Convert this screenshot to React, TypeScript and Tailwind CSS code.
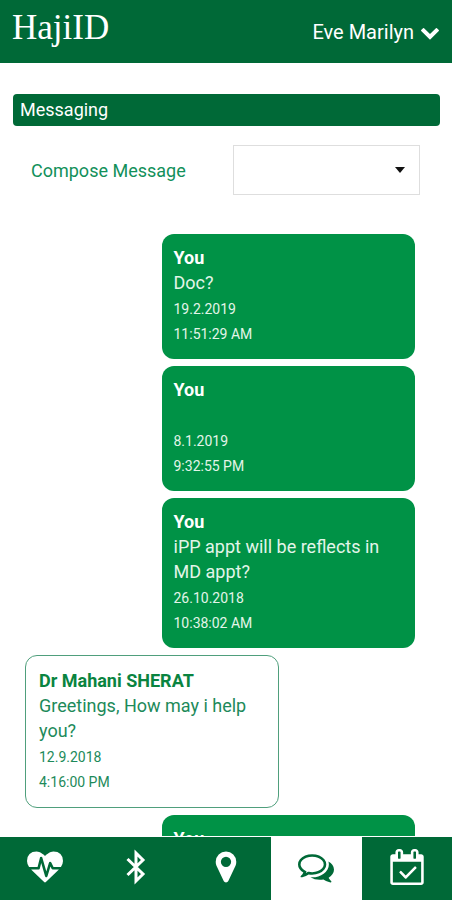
import { useState } from "react";
import clsx from "clsx";

type Message = {
  id: number;
  from: string;
  mine: boolean;
  text?: string;
  date?: string;
  time?: string;
};

const messages: Message[] = [
  { id: 1, from: "You", mine: true, text: "Doc?", date: "19.2.2019", time: "11:51:29 AM" },
  { id: 2, from: "You", mine: true, text: "", date: "8.1.2019", time: "9:32:55 PM" },
  { id: 3, from: "You", mine: true, text: "iPP appt will be reflects in MD appt?", date: "26.10.2018", time: "10:38:02 AM" },
  { id: 4, from: "Dr Mahani SHERAT", mine: false, text: "Greetings, How may i help you?", date: "12.9.2018", time: "4:16:00 PM" },
  { id: 5, from: "You", mine: true },
];

const CHEVRON =
  "M1683 808l-742 741q-19 19-45 19t-45-19l-742-741q-19-19-19-45.5t19-45.5l166-165q19-19 45-19t45 19l531 531 531-531q19-19 45-19t45 19l166 165q19 19 19 45.5t-19 45.5z";
const HEARTBEAT =
  "M1280 1024h305q-5 6-10 10.5t-9 7.5l-3 4-623 600q-18 18-44 18t-44-18l-624-602q-5-2-21-20h369q22 0 39.5-13.5t22.5-34.5l70-281 190 667q6 20 23 33t39 13q21 0 38-13t23-33l146-485 56 112q18 35 57 35zm512-428q0 145-103 300h-369l-111-221q-8-17-25.5-27t-36.5-8q-45 5-56 46l-129 430-196-686q-6-20-23.5-33t-39.5-13-39 13.5-22 34.5l-116 464h-423q-103-155-103-300 0-220 127-344t351-124q62 0 126.5 21.5t120 58 95.5 68.5 76 68q36-36 76-68t95.5-68.5 120-58 126.5-21.5q224 0 351 124t127 344z";
const MARKER =
  "M1152 640q0-106-75-181t-181-75-181 75-75 181 75 181 181 75 181-75 75-181zm256 0q0 109-33 179l-364 774q-16 33-47.5 52t-67.5 19-67.5-19-46.5-52l-365-774q-33-70-33-179 0-212 150-362t362-150 362 150 150 362z";
const COMMENTS =
  "M704 384q-153 0-286 52t-211.5 141-78.5 191q0 82 53 158t149 132l97 56-35 84q34-20 62-39l44-31 53 10q78 14 153 14 153 0 286-52t211.5-141 78.5-191-78.5-191-211.5-141-286-52zm0-128q191 0 353.5 68.5t256.5 186.5 94 257-94 257-256.5 186.5-353.5 68.5q-86 0-176-16-124 88-278 128-36 9-86 16h-3q-11 0-20.5-8t-11.5-21q-1-3-1-6.5t.5-6.5 2-6l2.5-5 3.5-5.5 4-5 4.5-5 4-4.5q5-6 23-25t26-29.5 22.5-29 25-38.5 20.5-44q-124-72-195-177t-71-224q0-139 94-257t256.5-186.5 353.5-68.5zm822 1169q10 24 20.5 44t25 38.5 22.5 29 26 29.5 23 25q1 1 4 4.5t4.5 5 4 5 3.5 5.5l2.5 5 2 6 .5 6.5-1 6.5q-3 14-13 22t-22 7q-50-7-86-16-154-40-278-128-90 16-176 16-271 0-472-132 58 4 88 4 161 0 309-45t264-129q125-92 192-212t67-254q0-77-23-152 129 71 204 178t75 230q0 120-71 224.5t-195 176.5z";
const CALENDAR =
  "M1303 964l-512 512q-10 9-23 9t-23-9l-288-288q-9-10-9-23t9-22l46-46q9-9 22-9t23 9l220 220 444-444q10-9 23-9t22 9l46 46q9 9 9 22t-9 23zm-1175 700h1408v-1024h-1408v1024zm384-1216v-288q0-14-9-23t-23-9h-64q-14 0-23 9t-9 23v288q0 14 9 23t23 9h64q14 0 23-9t9-23zm768 0v-288q0-14-9-23t-23-9h-64q-14 0-23 9t-9 23v288q0 14 9 23t23 9h64q14 0 23-9t9-23zm384-64v1280q0 52-38 90t-90 38h-1408q-52 0-90-38t-38-90v-1280q0-52 38-90t90-38h128v-96q0-66 47-113t113-47h64q66 0 113 47t47 113v96h384v-96q0-66 47-113t113-47h64q66 0 113 47t47 113v96h128q52 0 90 38t38 90z";

function Glyph({ d, className, viewBox = "0 0 1792 1792" }: { d: string; className?: string; viewBox?: string }) {
  return (
    <svg viewBox={viewBox} className={className} fill="currentColor" aria-hidden="true">
      <path d={d} />
    </svg>
  );
}

function BluetoothGlyph() {
  return (
    <svg viewBox="0 0 20 36" className="h-9 w-5" fill="none" stroke="currentColor" strokeWidth="3" aria-hidden="true">
      <path d="M1.5 10 L17 25 L10 32 V4 L17 11 L1.5 26" />
    </svg>
  );
}

const tabs = [
  { id: "health", label: "Health", icon: <Glyph d={HEARTBEAT} className="h-9 w-9" /> },
  { id: "devices", label: "Devices", icon: <BluetoothGlyph /> },
  { id: "map", label: "Map", icon: <Glyph d={MARKER} className="h-9 w-9" /> },
  { id: "messages", label: "Messages", icon: <Glyph d={COMMENTS} className="h-9 w-9" /> },
  { id: "calendar", label: "Calendar", icon: <Glyph d={CALENDAR} viewBox="0 0 1664 1792" className="h-9 w-9" /> },
];

function Bubble({ message }: { message: Message }) {
  const { from, mine, text, date, time } = message;
  return (
    <li
      className={clsx(
        "w-[65%] rounded-xl text-[18px] leading-[25px]",
        mine
          ? "self-end bg-[#009246] px-3 pt-[11px] pb-[14px] text-[#e3f5e9]"
          : "self-start border border-[#4f9f7c] bg-white px-[13px] pt-3 pb-[14px] text-[#1d8a5a]"
      )}
    >
      <p className={clsx("font-bold", mine ? "text-white" : "text-[#0a8440]")}>{from}</p>
      {text !== undefined && <p className="min-h-[25px]">{text}</p>}
      {date && (
        <p>
          <small className="text-sm leading-none">{date}</small>
        </p>
      )}
      {time && (
        <p>
          <small className="text-sm leading-none">{time}</small>
        </p>
      )}
    </li>
  );
}

export default function App() {
  const [tab, setTab] = useState("messages");
  const [recipient, setRecipient] = useState("");

  return (
    <div className="flex h-screen flex-col bg-white font-['Roboto',sans-serif]">
      <header className="flex h-[63px] shrink-0 items-center justify-between bg-[#006937] px-3 text-white">
        <a href="#home" className="pb-2 font-['Liberation_Serif',serif] text-[35px] leading-10">
          HajiID
        </a>
        <button type="button" className="flex items-center gap-1.5 text-xl">
          Eve Marilyn
          <Glyph d={CHEVRON} className="h-5 w-5" />
        </button>
      </header>

      {/* Scrolling content */}
      <main className="min-h-0 flex-1 overflow-y-auto pt-[31px] pr-3 pl-[13px] [scrollbar-width:none]">
        <h1 className="rounded bg-[#006937] px-[7px] text-[18px] leading-8 text-white">Messaging</h1>

        <div className="mt-[19px] flex items-center justify-between pr-5 pl-[18px]">
          <label htmlFor="recipient" className="text-[18px] text-[#12905a]">
            Compose Message
          </label>
          <div className="relative w-[48%]">
            <select
              id="recipient"
              value={recipient}
              onChange={(e) => setRecipient(e.target.value)}
              className="block h-[50px] w-full appearance-none border border-[#dedede] bg-white px-3 text-[18px]"
            >
              <option value=""></option>
            </select>
            <svg
              viewBox="0 0 10 6"
              className="pointer-events-none absolute top-[22px] right-[15px] h-[6px] w-[10px]"
              aria-hidden="true"
            >
              <path d="M0 0h10L5 6z" fill="#111" />
            </svg>
          </div>
        </div>

        <ul className="mt-[39px] flex flex-col gap-[7px] pr-[25px] pl-3">
          {messages.map((m) => (
            <Bubble key={m.id} message={m} />
          ))}
        </ul>
      </main>

      <nav className="mt-px grid h-[63px] shrink-0 grid-cols-5 bg-[#006937]">
        {tabs.map((t) => (
          <button
            key={t.id}
            type="button"
            aria-label={t.label}
            onClick={() => setTab(t.id)}
            className={clsx(
              "flex items-center justify-center pb-[3px]",
              tab === t.id ? "bg-white text-[#006937]" : "text-white"
            )}
          >
            {t.icon}
          </button>
        ))}
      </nav>
    </div>
  );
}
